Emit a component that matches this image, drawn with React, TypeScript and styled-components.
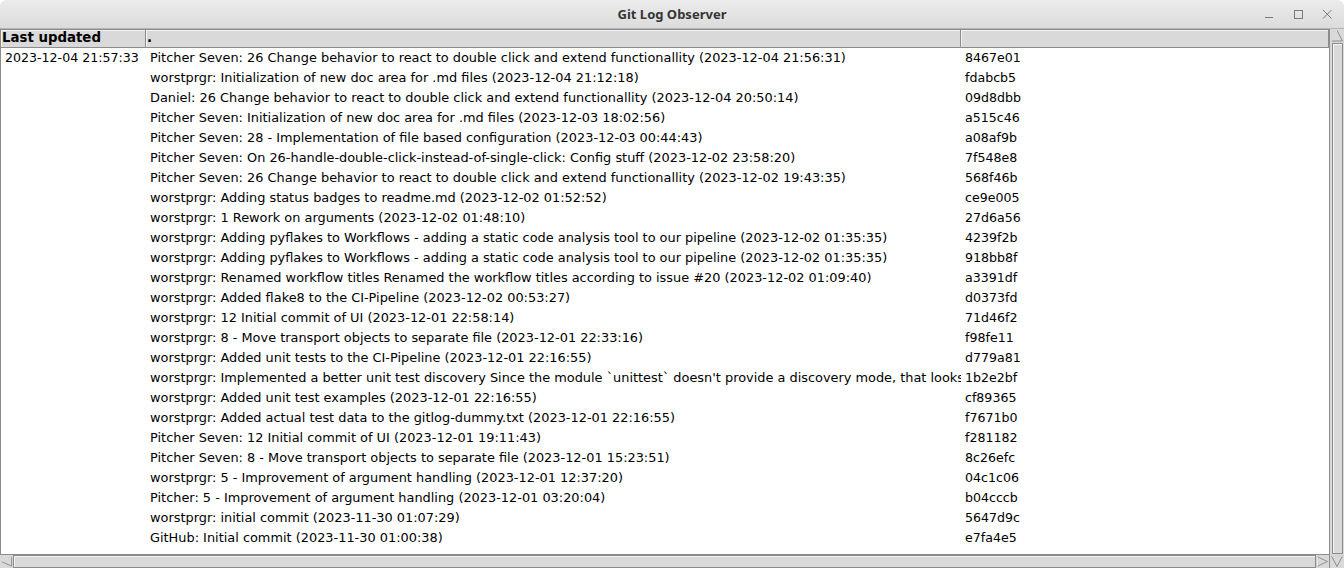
import React from "react";
import styled, { createGlobalStyle } from "styled-components";

const Global = createGlobalStyle`
  html, body { margin: 0; padding: 0; background: #ffffff; }
  body { width: 1344px; height: 568px; overflow: hidden; }
`;

const rows: [string, string, string][] = [
  ["2023-12-04 21:57:33", "Pitcher Seven: 26 Change behavior to react to double click and extend functionallity (2023-12-04 21:56:31)", "8467e01"],
  ["", "worstprgr: Initialization of new doc area for .md files (2023-12-04 21:12:18)", "fdabcb5"],
  ["", "Daniel: 26 Change behavior to react to double click and extend functionallity (2023-12-04 20:50:14)", "09d8dbb"],
  ["", "Pitcher Seven: Initialization of new doc area for .md files (2023-12-03 18:02:56)", "a515c46"],
  ["", "Pitcher Seven: 28 - Implementation of file based configuration (2023-12-03 00:44:43)", "a08af9b"],
  ["", "Pitcher Seven: On 26-handle-double-click-instead-of-single-click: Config stuff (2023-12-02 23:58:20)", "7f548e8"],
  ["", "Pitcher Seven: 26 Change behavior to react to double click and extend functionallity (2023-12-02 19:43:35)", "568f46b"],
  ["", "worstprgr: Adding status badges to readme.md (2023-12-02 01:52:52)", "ce9e005"],
  ["", "worstprgr: 1 Rework on arguments (2023-12-02 01:48:10)", "27d6a56"],
  ["", "worstprgr: Adding pyflakes to Workflows - adding a static code analysis tool to our pipeline (2023-12-02 01:35:35)", "4239f2b"],
  ["", "worstprgr: Adding pyflakes to Workflows - adding a static code analysis tool to our pipeline (2023-12-02 01:35:35)", "918bb8f"],
  ["", "worstprgr: Renamed workflow titles Renamed the workflow titles according to issue #20 (2023-12-02 01:09:40)", "a3391df"],
  ["", "worstprgr: Added flake8 to the CI-Pipeline (2023-12-02 00:53:27)", "d0373fd"],
  ["", "worstprgr: 12 Initial commit of UI (2023-12-01 22:58:14)", "71d46f2"],
  ["", "worstprgr: 8 - Move transport objects to separate file (2023-12-01 22:33:16)", "f98fe11"],
  ["", "worstprgr: Added unit tests to the CI-Pipeline (2023-12-01 22:16:55)", "d779a81"],
  ["", "worstprgr: Implemented a better unit test discovery Since the module `unittest` doesn't provide a discovery mode, that looks for test files automatically (2023-12-01 22:16:55)", "1b2e2bf"],
  ["", "worstprgr: Added unit test examples (2023-12-01 22:16:55)", "cf89365"],
  ["", "worstprgr: Added actual test data to the gitlog-dummy.txt (2023-12-01 22:16:55)", "f7671b0"],
  ["", "Pitcher Seven: 12 Initial commit of UI (2023-12-01 19:11:43)", "f281182"],
  ["", "Pitcher Seven: 8 - Move transport objects to separate file (2023-12-01 15:23:51)", "8c26efc"],
  ["", "worstprgr: 5 - Improvement of argument handling (2023-12-01 12:37:20)", "04c1c06"],
  ["", "Pitcher: 5 - Improvement of argument handling (2023-12-01 03:20:04)", "b04cccb"],
  ["", "worstprgr: initial commit (2023-11-30 01:07:29)", "5647d9c"],
  ["", "GitHub: Initial commit (2023-11-30 01:00:38)", "e7fa4e5"],
];

const Window = styled.div`
  width: 1344px;
  height: 568px;
  display: flex;
  flex-direction: column;
  background: #ffffff;
  overflow: hidden;
`;

const TitleBar = styled.div`
  height: 29px;
  flex: 0 0 29px;
  box-sizing: border-box;
  background: linear-gradient(#ececec, #dbdbdb);
  border-bottom: 1px solid #b4b4b4;
  border-radius: 6px 6px 0 0;
  display: grid;
  grid-template-columns: 1fr auto 1fr;
  align-items: center;
`;

const Title = styled.div`
  grid-column: 2;
  font-family: "Noto Sans", "DejaVu Sans", sans-serif;
  font-weight: 700;
  font-size: 13px;
  color: #353535;
`;

const Controls = styled.div`
  grid-column: 3;
  justify-self: end;
  display: flex;
  align-items: center;
  gap: 19px;
  padding-right: 12px;
`;

const Ctl = styled.svg`
  width: 10px;
  height: 10px;
  display: block;
`;

const Body = styled.div`
  flex: 1;
  display: flex;
  min-height: 0;
`;

const Main = styled.div`
  flex: 1;
  display: flex;
  flex-direction: column;
  min-width: 0;
`;

const Tree = styled.div`
  flex: 1;
  min-height: 0;
  border-left: 1px solid #8c8c8c;
  border-bottom: 1px solid #8c8c8c;
  display: flex;
  flex-direction: column;
  overflow: hidden;
`;

const Grid = styled.div`
  display: grid;
  grid-template-columns: 145px 815px 1fr;
`;

const HeaderCell = styled.div`
  height: 19px;
  box-sizing: border-box;
  background: #d9d9d9;
  border-top: 1px solid #8c8c8c;
  border-right: 1px solid #8c8c8c;
  border-bottom: 1px solid #8c8c8c;
  box-shadow: inset 1px 1px 0 #f2f2f2;
  font-family: "DejaVu Sans", sans-serif;
  font-weight: 700;
  font-size: 13.33px;
  line-height: 15px;
  padding-left: 1px;
  color: #000;
  white-space: nowrap;
  overflow: hidden;
`;

const Cell = styled.div<{ $size: number }>`
  height: 20px;
  line-height: 20px;
  padding-left: 4px;
  font-family: "DejaVu Sans", sans-serif;
  font-size: ${(p) => p.$size}px;
  color: #000;
  white-space: nowrap;
  overflow: hidden;
`;

const HScroll = styled.div`
  height: 13px;
  flex: 0 0 13px;
  display: flex;
  background: #d9d9d9;
`;

const Trough = styled.div`
  flex: 1;
  box-sizing: border-box;
  border: 1px solid #8c8c8c;
  background: #d9d9d9;
  box-shadow: inset 1px 1px 0 #f4f4f4;
`;

const VScroll = styled.div`
  width: 15px;
  flex: 0 0 15px;
  display: flex;
  flex-direction: column;
  background: #d9d9d9;
  box-sizing: border-box;
  border-left: 1px solid #8c8c8c;
`;

const Arrow = styled.svg`
  width: 14px;
  height: 13px;
  flex: 0 0 13px;
  display: block;
`;

const VThumb = styled.div`
  flex: 1;
  box-sizing: border-box;
  border: 1px solid #8c8c8c;
  box-shadow: inset 1px 1px 0 #f4f4f4;
  margin: 1px 1px 1px 2px;
`;

export default function App() {
  return (
    <>
      <Global />
      <Window>
        <TitleBar>
          <Title>Git Log Observer</Title>
          <Controls>
            <Ctl viewBox="0 0 10 10">
              <path d="M1 8.5h8" stroke="#7a7a7a" strokeWidth="1" />
            </Ctl>
            <Ctl viewBox="0 0 10 10">
              <rect x="1.5" y="1.5" width="8" height="8" fill="none" stroke="#7a7a7a" strokeWidth="1" />
            </Ctl>
            <Ctl viewBox="0 0 10 10">
              <path d="M1 1l8.5 8.5M9.5 1L1 9.5" stroke="#7a7a7a" strokeWidth="1" />
            </Ctl>
          </Controls>
        </TitleBar>
        <Body>
          <Main>
            <Tree>
              <Grid>
                <HeaderCell>Last updated</HeaderCell>
                <HeaderCell>.</HeaderCell>
                <HeaderCell />
                {rows.map((r, i) => (
                  <React.Fragment key={i}>
                    <Cell $size={12.6}>{r[0]}</Cell>
                    <Cell $size={12.9}>{r[1]}</Cell>
                    <Cell $size={12.6}>{r[2]}</Cell>
                  </React.Fragment>
                ))}
              </Grid>
            </Tree>
            <HScroll>
              <Arrow viewBox="0 0 14 13">
                <path d="M12.5 1.5L1.5 6.5L12.5 11.5Z" fill="#d9d9d9" stroke="#8c8c8c" />
                <path d="M12.5 1.5L1.5 6.5" stroke="#f4f4f4" />
              </Arrow>
              <Trough />
              <Arrow viewBox="0 0 14 13">
                <path d="M1.5 1.5L12.5 6.5L1.5 11.5Z" fill="#d9d9d9" stroke="#8c8c8c" />
                <path d="M1.5 1.5L1.5 11.5" stroke="#f4f4f4" />
              </Arrow>
            </HScroll>
          </Main>
          <VScroll>
            <Arrow viewBox="0 0 14 13">
              <path d="M1.5 12L7 1.5L12.5 12Z" fill="#d9d9d9" stroke="#8c8c8c" />
              <path d="M1.5 12L7 1.5" stroke="#f4f4f4" />
            </Arrow>
            <VThumb />
            <Arrow viewBox="0 0 14 13">
              <path d="M1.5 1L7 11.5L12.5 1Z" fill="#d9d9d9" stroke="#8c8c8c" />
              <path d="M1.5 1L12.5 1" stroke="#f4f4f4" />
            </Arrow>
          </VScroll>
        </Body>
      </Window>
    </>
  );
}
